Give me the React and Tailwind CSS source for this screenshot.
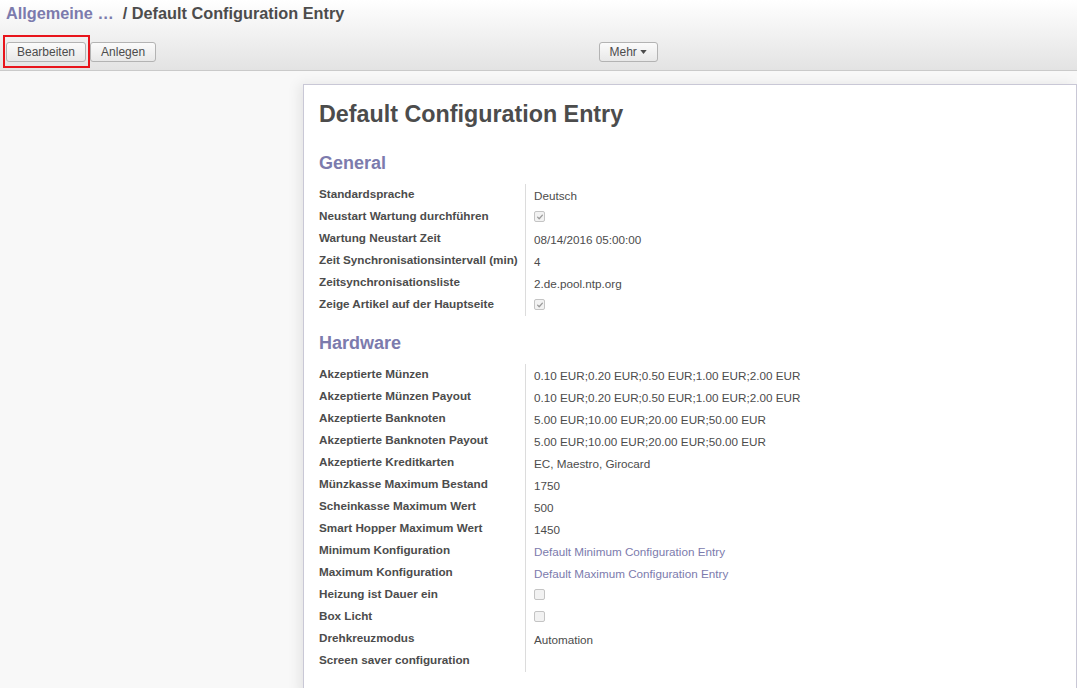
const general = [
  { label: "Standardsprache", value: "Deutsch" },
  { label: "Neustart Wartung durchführen", check: true },
  { label: "Wartung Neustart Zeit", value: "08/14/2016 05:00:00" },
  { label: "Zeit Synchronisationsintervall (min)", value: "4" },
  { label: "Zeitsynchronisationsliste", value: "2.de.pool.ntp.org" },
  { label: "Zeige Artikel auf der Hauptseite", check: true },
];

const hardware = [
  { label: "Akzeptierte Münzen", value: "0.10 EUR;0.20 EUR;0.50 EUR;1.00 EUR;2.00 EUR" },
  { label: "Akzeptierte Münzen Payout", value: "0.10 EUR;0.20 EUR;0.50 EUR;1.00 EUR;2.00 EUR" },
  { label: "Akzeptierte Banknoten", value: "5.00 EUR;10.00 EUR;20.00 EUR;50.00 EUR" },
  { label: "Akzeptierte Banknoten Payout", value: "5.00 EUR;10.00 EUR;20.00 EUR;50.00 EUR" },
  { label: "Akzeptierte Kreditkarten", value: "EC, Maestro, Girocard" },
  { label: "Münzkasse Maximum Bestand", value: "1750" },
  { label: "Scheinkasse Maximum Wert", value: "500" },
  { label: "Smart Hopper Maximum Wert", value: "1450" },
  { label: "Minimum Konfiguration", value: "Default Minimum Configuration Entry", link: true },
  { label: "Maximum Konfiguration", value: "Default Maximum Configuration Entry", link: true },
  { label: "Heizung ist Dauer ein", check: false },
  { label: "Box Licht", check: false },
  { label: "Drehkreuzmodus", value: "Automation" },
  { label: "Screen saver configuration", value: "" },
];

function Checkbox({ checked }) {
  return (
    <span className="mt-[3px] flex h-[11px] w-[11px] items-center justify-center rounded-[2px] border border-[#c4c4c4] bg-[#f2f2f2]">
      {checked && (
        <svg viewBox="0 0 10 10" className="h-[8px] w-[8px]" fill="none" stroke="#9a9a9a" strokeWidth="1.6" strokeLinecap="round" strokeLinejoin="round">
          <path d="M2 5.2l2 2 4-4.5" />
        </svg>
      )}
    </span>
  );
}

function FieldTable({ rows }) {
  return (
    <div className="flex flex-col">
      {rows.map((r) => (
        <div key={r.label} className="flex h-[22px]">
          <div className="w-[206px] shrink-0 text-[11.7px] font-bold leading-[20px] text-[#4c4c4c]">
            {r.label}
          </div>
          <div className="flex-1 border-l border-[#dcdcdc] pl-[8px] pt-[2px] text-[11.7px] leading-[20px]">
            {"check" in r ? (
              <Checkbox checked={r.check} />
            ) : (
              <span className={r.link ? "text-[#7c7bad]" : "text-[#4c4c4c]"}>{r.value}</span>
            )}
          </div>
        </div>
      ))}
    </div>
  );
}

function Btn({ children }) {
  return (
    <button className="flex h-[20px] items-center rounded-[3px] border border-[#b3b3b3] bg-gradient-to-b from-[#fbfbfb] to-[#e8e8e8] px-[10px] text-[12px] leading-none text-[#4c4c4c]">
      {children}
    </button>
  );
}

export default function App() {
  return (
    <main className="min-h-[688px] bg-[#f8f8f8] font-['Liberation_Sans',Arial,sans-serif] text-[#4c4c4c]">
      {/* Control panel */}
      <header className="h-[71px] border-b border-[#cacaca] bg-gradient-to-b from-[#ffffff] to-[#e3e3e3]">
        <div className="h-[26px] pl-[6px] text-[16.3px] font-bold leading-[26px]">
          <span className="text-[#7c7bad]">Allgemeine …</span>
          <span className="ml-[9px] text-[#4c4c4c]">/ Default Configuration Entry</span>
        </div>
        <div className="mt-[9px] grid h-[33px] grid-cols-2">
          <div className="flex items-center pl-[3px]">
            <div className="border-2 border-[#e8141b] pb-[4px] pl-[1px] pr-[2px] pt-[5px]">
              <Btn>Bearbeiten</Btn>
            </div>
            <Btn>Anlegen</Btn>
          </div>
          <div className="flex items-center pl-[60px]">
            <Btn>
              Mehr
              <svg viewBox="0 0 8 5" className="ml-[3px] h-[4px] w-[7px]" fill="#4c4c4c">
                <path d="M0 0h8L4 5z" />
              </svg>
            </Btn>
          </div>
        </div>
      </header>

      {/* Sheet */}
      <section className="ml-[303px] mt-[13px] w-[774px] border border-[#c9c8d6] bg-white pb-[24px] pl-[15px] pt-[16px] shadow-[-4px_0_12px_rgba(0,0,0,0.08)]">
        <h1 className="text-[23.3px] font-bold leading-[26px] text-[#4c4c4c]">
          Default Configuration Entry
        </h1>

        <h2 className="mt-[26px] text-[18px] font-bold leading-[20px] text-[#7c7bad]">General</h2>
        <div className="mt-[11px]">
          <FieldTable rows={general} />
        </div>

        <h2 className="mt-[17px] text-[18px] font-bold leading-[20px] text-[#7c7bad]">Hardware</h2>
        <div className="mt-[11px]">
          <FieldTable rows={hardware} />
        </div>
      </section>
    </main>
  );
}
